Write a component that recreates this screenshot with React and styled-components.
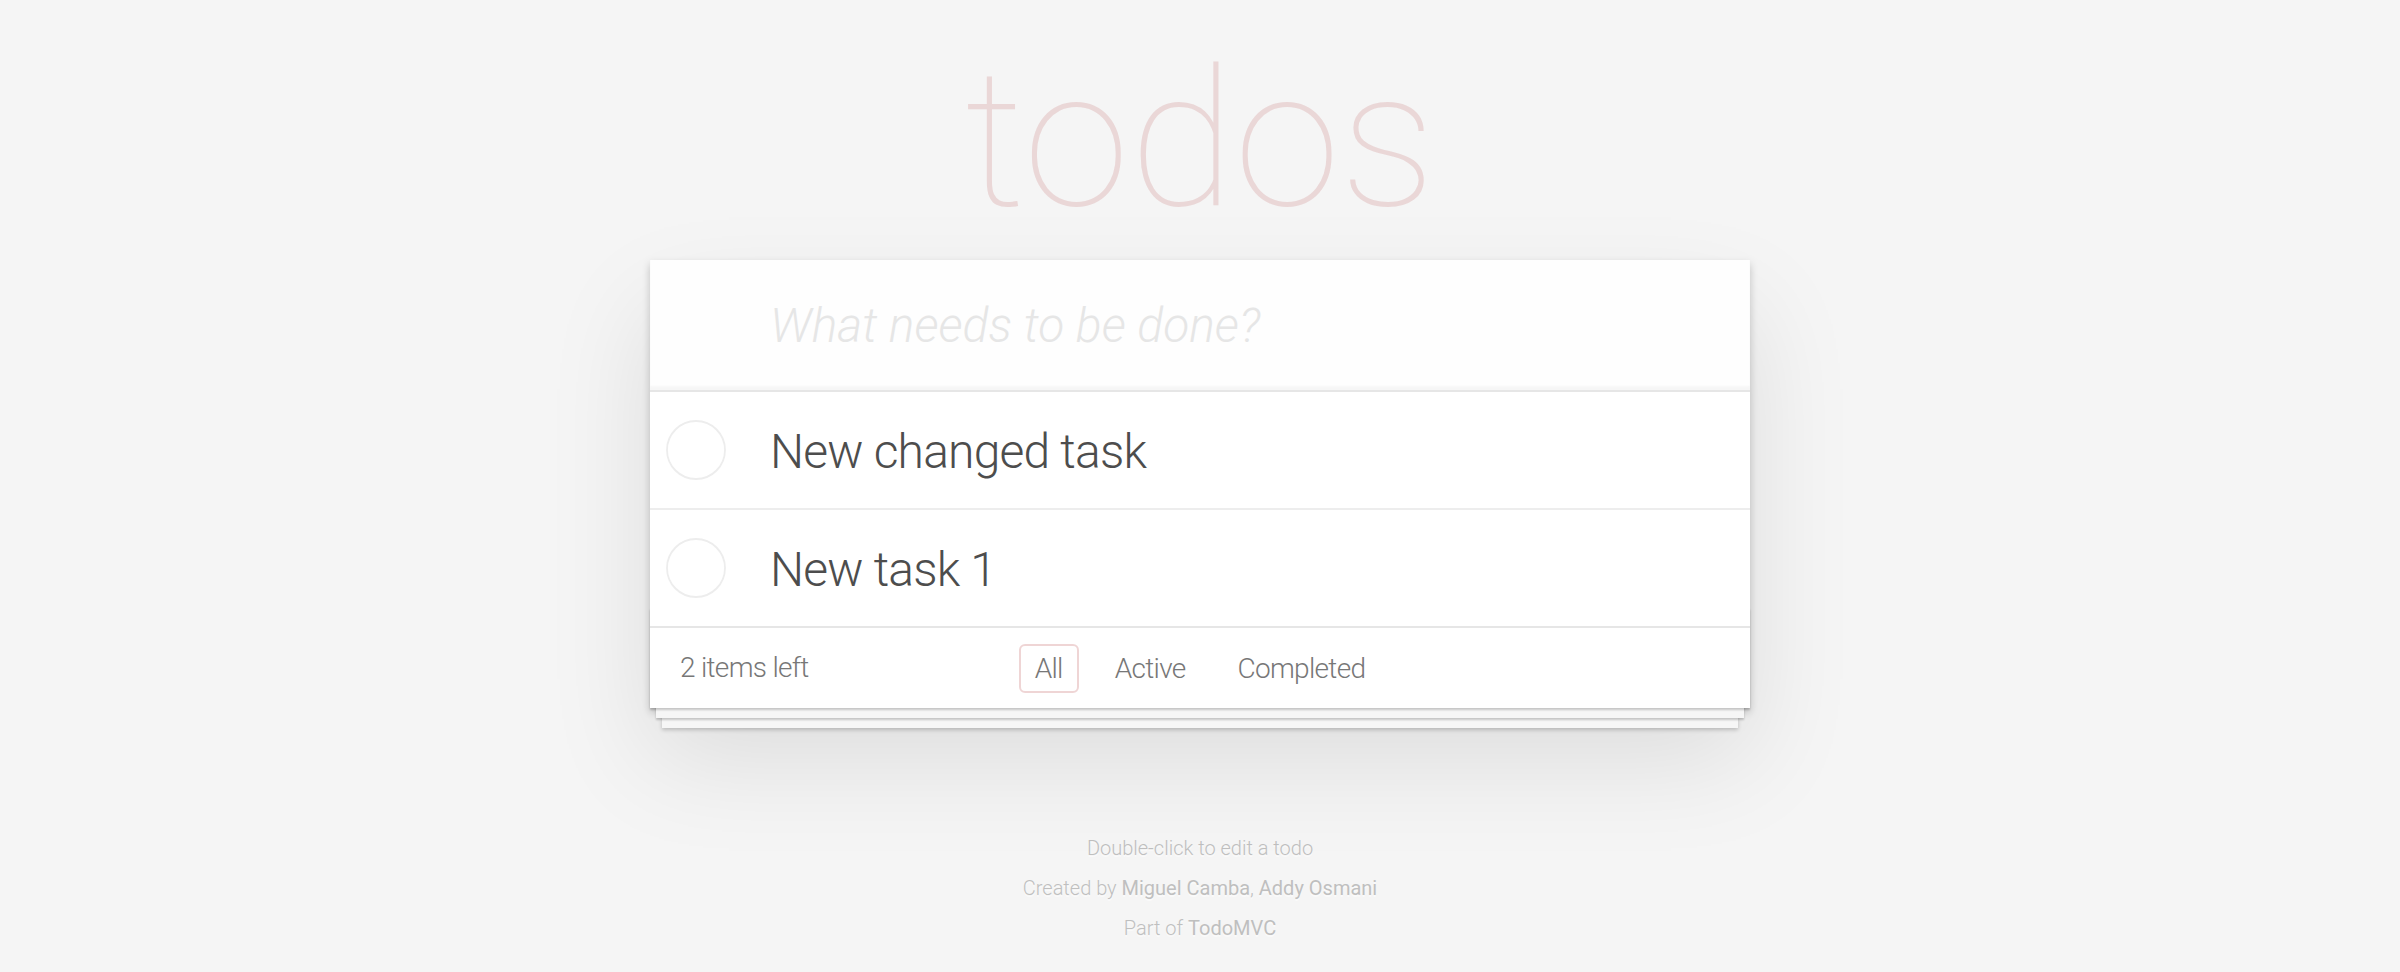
import React from 'react'
import styled, { createGlobalStyle } from 'styled-components'

const TODOS = [
  { id: 1, title: 'New changed task' },
  { id: 2, title: 'New task 1' },
]

const FILTERS = ['All', 'Active', 'Completed']

const GlobalStyle = createGlobalStyle`
  html, body {
    margin: 0;
    padding: 0;
  }
  body {
    background: #f5f5f5;
    color: #4d4d4d;
    font-family: Roboto, "Open Sans", "Liberation Sans", sans-serif;
    font-weight: 300;
    -webkit-font-smoothing: antialiased;
  }
`

const ToggleCircle = () => (
  <svg width="60" height="60" viewBox="0 0 60 60">
    <circle cx="30" cy="30" r="29" fill="none" stroke="#ededed" strokeWidth="1.8" />
  </svg>
)

const TodoItem = ({ title }) => (
  <Item>
    <ToggleCell>
      <ToggleCircle />
    </ToggleCell>
    <Label>{title}</Label>
  </Item>
)

export default function App() {
  const selected = 'All'

  return (
    <>
      <GlobalStyle />
      <Page>
        <Title>todos</Title>
        <Card>
          <NewTodo placeholder="What needs to be done?" />
          <TodoList>
            {TODOS.map((todo) => <TodoItem key={todo.id} {...todo} />)}
          </TodoList>
          <Footer>
            <Count>{TODOS.length} items left</Count>
            <Filters>
              {FILTERS.map((f) => (
                <li key={f}>
                  <FilterLink href="#" $selected={f === selected}>{f}</FilterLink>
                </li>
              ))}
            </Filters>
            <span />
          </Footer>
        </Card>
        <Info>
          <InfoLine>Double-click to edit a todo</InfoLine>
          <InfoLine>
            Created by <InfoLink href="#">Miguel Camba</InfoLink>, <InfoLink href="#">Addy Osmani</InfoLink>
          </InfoLine>
          <InfoLine>
            Part of <InfoLink href="#">TodoMVC</InfoLink>
          </InfoLine>
        </Info>
      </Page>
    </>
  )
}

const Page = styled.div`
  width: 1100px;
  margin: 0 auto;
`

const Title = styled.h1`
  margin: 0;
  height: 260px;
  padding-top: 44px;
  box-sizing: border-box;
  font-size: 192px;
  line-height: 192px;
  font-weight: 100;
  text-align: center;
  color: rgba(175, 47, 47, 0.15);
`

const Card = styled.section`
  position: relative;
  background: #fff;
  box-shadow: 0 4px 8px 0 rgba(0, 0, 0, 0.2), 0 50px 100px 0 rgba(0, 0, 0, 0.1);
`

const NewTodo = styled.input`
  display: block;
  width: 100%;
  height: 130px;
  box-sizing: border-box;
  padding: 0 32px 0 120px;
  border: none;
  outline: none;
  background: rgba(0, 0, 0, 0.003);
  box-shadow: inset 0 -4px 2px rgba(0, 0, 0, 0.03);
  font-family: inherit;
  font-size: 48px;
  font-weight: 300;
  color: #4d4d4d;

  &::placeholder {
    font-style: italic;
    font-weight: 300;
    color: #e6e6e6;
  }
`

const TodoList = styled.ul`
  margin: 0;
  padding: 0;
  list-style: none;
  border-top: 2px solid #e6e6e6;
`

const Item = styled.li`
  display: flex;
  align-items: center;
  height: 116px;
  border-bottom: 2px solid #ededed;

  &:last-child {
    border-bottom: none;
  }
`

const ToggleCell = styled.span`
  flex: none;
  width: 120px;
  padding-left: 16px;
  box-sizing: border-box;
  display: flex;
  align-items: center;
`

const Label = styled.label`
  padding-top: 3px;
  font-size: 48px;
  line-height: 58px;
  font-weight: 300;
  letter-spacing: -0.8px;
  color: #4d4d4d;
`

const Footer = styled.footer`
  position: relative;
  display: grid;
  grid-template-columns: 1fr auto 1fr;
  grid-template-rows: 40px;
  align-items: center;
  height: 40px;
  padding: 20px 30px;
  border-top: 2px solid #e6e6e6;
  color: #777;
  font-size: 28px;
  line-height: 40px;
  letter-spacing: -0.7px;

  &::before {
    content: '';
    position: absolute;
    left: 0;
    right: 0;
    bottom: 0;
    height: 100px;
    pointer-events: none;
    box-shadow: 0 2px 2px rgba(0, 0, 0, 0.2),
      0 16px 0 -6px #f6f6f6,
      0 18px 2px -6px rgba(0, 0, 0, 0.2),
      0 32px 0 -12px #f6f6f6,
      0 34px 4px -12px rgba(0, 0, 0, 0.2);
  }
`

const Count = styled.span`
  justify-self: start;
`

const Filters = styled.ul`
  display: flex;
  gap: 20px;
  margin: 0;
  padding: 0;
  list-style: none;
`

const FilterLink = styled.a`
  display: block;
  padding: 6px 14px;
  line-height: 33px;
  border: 2px solid ${(p) => (p.$selected ? 'rgba(175, 47, 47, 0.2)' : 'transparent')};
  border-radius: 6px;
  color: inherit;
  text-decoration: none;
`

const Info = styled.footer`
  display: flex;
  flex-direction: column;
  gap: 20px;
  margin-top: 130px;
  color: #bfbfbf;
  font-size: 20px;
  text-align: center;
  text-shadow: 0 2px 0 rgba(255, 255, 255, 0.5);
`

const InfoLine = styled.p`
  margin: 0;
  line-height: 20px;
`

const InfoLink = styled.a`
  color: inherit;
  text-decoration: none;
  font-weight: 400;
`
